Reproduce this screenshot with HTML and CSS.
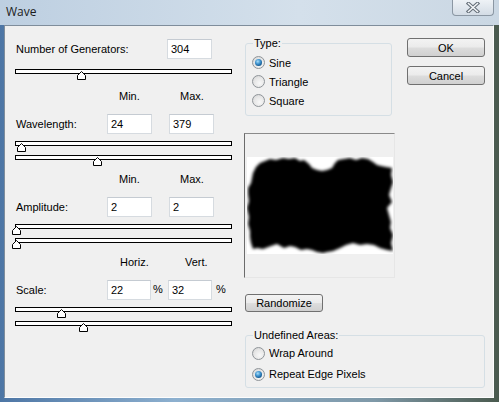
FILE: index.html
```html
<!DOCTYPE html>
<html lang="en">
<head>
    <meta charset="UTF-8">
    <meta name="viewport" content="width=device-width, initial-scale=1.0">
    <title>Wave</title>
    <link rel="stylesheet" href="styles.css">
</head>
<body>

<div class="window">
    <div class="titlebar">
        <span class="title">Wave</span>
        <button class="close" title="Close">
            <svg width="14" height="11" viewBox="0 0 14 11">
                <path d="M2.5,1.5 L11.5,9.5 M11.5,1.5 L2.5,9.5" stroke="#66707a" stroke-width="3.6" stroke-linecap="square"/>
                <path d="M2.5,1.5 L11.5,9.5 M11.5,1.5 L2.5,9.5" stroke="#f6f8fa" stroke-width="1.5" stroke-linecap="square"/>
            </svg>
        </button>
    </div>

    <div class="client">
        <!-- left column: generator settings -->
        <div class="params">
            <div class="group gen">
                <div class="row row-wide">
                    <label>Number of Generators:</label>
                    <input type="text" value="304">
                </div>
                <div class="slider">
                    <div class="track"></div>
                    <svg class="thumb" style="left: 62px" width="9" height="9" viewBox="0 0 9 9"><path d="M0.5,8.5 V4.5 L4.5,0.5 L8.5,4.5 V8.5 Z"/></svg>
                </div>
            </div>

            <div class="group wl">
                <div class="head"><span>Min.</span><span>Max.</span></div>
                <div class="row">
                    <label>Wavelength:</label>
                    <input type="text" value="24">
                    <input type="text" class="second" value="379">
                </div>
                <div class="slider">
                    <div class="track"></div>
                    <svg class="thumb" style="left: 2px" width="9" height="9" viewBox="0 0 9 9"><path d="M0.5,8.5 V4.5 L4.5,0.5 L8.5,4.5 V8.5 Z"/></svg>
                </div>
                <div class="slider">
                    <div class="track"></div>
                    <svg class="thumb" style="left: 78px" width="9" height="9" viewBox="0 0 9 9"><path d="M0.5,8.5 V4.5 L4.5,0.5 L8.5,4.5 V8.5 Z"/></svg>
                </div>
            </div>

            <div class="group">
                <div class="head"><span>Min.</span><span>Max.</span></div>
                <div class="row">
                    <label>Amplitude:</label>
                    <input type="text" value="2">
                    <input type="text" class="second" value="2">
                </div>
                <div class="slider">
                    <div class="track"></div>
                    <svg class="thumb" style="left: -3px" width="9" height="9" viewBox="0 0 9 9"><path d="M0.5,8.5 V4.5 L4.5,0.5 L8.5,4.5 V8.5 Z"/></svg>
                </div>
                <div class="slider">
                    <div class="track"></div>
                    <svg class="thumb" style="left: -3px" width="9" height="9" viewBox="0 0 9 9"><path d="M0.5,8.5 V4.5 L4.5,0.5 L8.5,4.5 V8.5 Z"/></svg>
                </div>
            </div>

            <div class="group">
                <div class="head scale"><span>Horiz.</span><span>Vert.</span></div>
                <div class="row row-scale">
                    <label>Scale:</label>
                    <input type="text" value="22">
                    <span class="pct">%</span>
                    <input type="text" value="32">
                    <span class="pct last">%</span>
                </div>
                <div class="slider">
                    <div class="track"></div>
                    <svg class="thumb" style="left: 42px" width="9" height="9" viewBox="0 0 9 9"><path d="M0.5,8.5 V4.5 L4.5,0.5 L8.5,4.5 V8.5 Z"/></svg>
                </div>
                <div class="slider">
                    <div class="track"></div>
                    <svg class="thumb" style="left: 64px" width="9" height="9" viewBox="0 0 9 9"><path d="M0.5,8.5 V4.5 L4.5,0.5 L8.5,4.5 V8.5 Z"/></svg>
                </div>
            </div>
        </div>

        <!-- right side: wave type, buttons, preview -->
        <div class="side">
            <fieldset class="type">
                <legend>Type:</legend>
                <div class="options">
                    <div class="option"><span class="radio checked"></span>Sine</div>
                    <div class="option"><span class="radio"></span>Triangle</div>
                    <div class="option"><span class="radio"></span>Square</div>
                </div>
            </fieldset>

            <div class="actions">
                <button class="btn">OK</button>
                <button class="btn">Cancel</button>
            </div>

            <div class="preview">
                <svg width="146" height="97" viewBox="0 0 146 97">
                    <defs>
                        <filter id="soft" x="-10%" y="-10%" width="120%" height="120%">
                            <feGaussianBlur stdDeviation="1.7"/>
                        </filter>
                    </defs>
                    <rect width="146" height="97" fill="#fff"/>
                    <path filter="url(#soft)" fill="#000" d="M6,16 L9,10 L13,6 L18,4 L23,2 L29,3 L36,1 L42,2 L48,1 L53,4 L57,3 L62,7 L65,11 L70,13 L75,14 L80,13 L85,11 L88,6 L91,3 L97,2 L103,1 L109,3 L115,1 L121,2 L126,5 L130,8 L134,9 L139,10 L145,11 L144,18 L146,25 L144,31 L142,38 L145,45 L140,51 L142,58 L144,65 L143,71 L146,78 L144,86 L146,94 L140,93 L133,91 L127,88 L120,87 L113,88 L106,86 L99,88 L93,91 L86,94 L80,95 L76,96 L70,95 L65,93 L60,92 L54,93 L48,90 L43,89 L37,91 L30,87 L24,89 L16,92 L10,91 L6,92 L4,86 L3,80 L3,74 L1,67 L2,60 L0,51 L2,44 L1,37 L1,31 L4,26 L5,21 Z"/>
                </svg>
            </div>

            <button class="btn randomize">Randomize</button>

            <fieldset class="undefined">
                <legend>Undefined Areas:</legend>
                <div class="options">
                    <div class="option"><span class="radio"></span>Wrap Around</div>
                    <div class="option"><span class="radio checked"></span>Repeat Edge Pixels</div>
                </div>
            </fieldset>
        </div>
    </div>
</div>

</body>
</html>
```

FILE: styles.css
```css
body {
    margin: 0;
    font-family: "Liberation Sans", Arial, sans-serif;
    font-size: 11px;
    color: #000;
    background: #4c5b4f;
    overflow: hidden;
}
.window {
    width: 499px;
    height: 402px;
    display: flex;
    flex-direction: column;
    background: linear-gradient(to right, #4d76a5, #8db0cf 35%, #7f99a8 75%, #4a5a4e);
}

/* title bar */
.titlebar {
    flex: none;
    height: 25px;
    display: flex;
    justify-content: space-between;
    align-items: flex-start;
    background: linear-gradient(to right, #bdcfe1, #d4e0eb 60%, #cad7e3);
}
.title {
    font-family: "Open Sans", "Noto Sans", sans-serif;
    font-size: 12px;
    line-height: 16px;
    color: #1c1c1c;
    padding: 4px 0 0 6px;
}
.close {
    width: 42px;
    height: 16px;
    margin-right: 5px;
    padding: 0;
    border: 1px solid #8b97a3;
    border-top: none;
    border-radius: 0 0 4px 4px;
    background: linear-gradient(#eef2f6, #d3dce5);
    display: flex;
    align-items: center;
    justify-content: center;
}

/* dialog body */
.client {
    flex: 1;
    margin: 0 5px 4px 4px;
    padding: 10px 0 0 10px;
    background: #f0f0f0;
    border: 1px solid;
    border-color: #7f8d9b #fdfdfd #fdfdfd #7f8d9b;
    display: flex;
    gap: 12px;
}

.params {
    width: 217px;
    padding-top: 3px;
}
.group + .group {
    margin-top: 5px;
}
.group.wl {
    margin-top: 8px;
}
.head, .row {
    display: grid;
    grid-template-columns: 92px 45px 17px 45px;
}
.head {
    height: 14px;
    line-height: 14px;
}
.head span:first-child {
    grid-column: 2;
    padding-left: 12px;
}
.head span:last-child {
    grid-column: 4;
    padding-left: 11px;
}
.head.scale span:first-child {
    padding-left: 13px;
}
.head.scale span:last-child {
    padding-left: 16px;
}
.row {
    height: 20px;
    margin-top: 11px;
    align-items: center;
}
.row label {
    padding-left: 1px;
}
.row .second {
    grid-column: 4;
}
.row-wide {
    grid-template-columns: 152px 45px;
    margin-top: 0;
}
.row-scale {
    grid-template-columns: 92px 44px 17px 44px 1fr;
}
.pct {
    padding-left: 2px;
    margin-top: -2px;
}
.pct.last {
    padding-left: 4px;
}
input {
    width: 100%;
    height: 20px;
    box-sizing: border-box;
    border: 1px solid #d6dbe0;
    border-top-color: #c5cbd2;
    padding: 0 3px;
    font: inherit;
    color: #000;
    background: #fff;
}

/* trackbars */
.slider {
    position: relative;
    height: 12px;
    margin-top: 7px;
}
.slider + .slider {
    margin-top: 2px;
}
.gen .slider {
    margin-top: 10px;
}
.track {
    height: 5px;
    box-sizing: border-box;
    border: 1px solid #000;
    background: #fff;
}
.thumb {
    position: absolute;
    top: 2px;
    display: block;
}
.thumb path {
    fill: #fff;
    stroke: #000;
}

/* right side */
.side {
    display: grid;
    grid-template-columns: 151px 78px;
    column-gap: 12px;
    align-items: start;
    align-content: start;
}
fieldset {
    margin: 0 0 0 1px;
    padding: 0 0 0 7px;
    border: 1px solid #d5dfe5;
    border-radius: 3px;
    min-width: 0;
    box-sizing: border-box;
}
legend {
    padding: 0 1px;
    line-height: 14px;
}
.type {
    width: 147px;
    padding-bottom: 5px;
}
.type .options {
    padding-top: 3px;
}
.option {
    display: flex;
    align-items: center;
    gap: 4px;
    height: 19px;
    margin-left: -1px;
}
.undefined {
    grid-column: 1 / 3;
    width: 240px;
    margin-top: 16px;
    padding-bottom: 3px;
}
.undefined .options {
    padding-top: 1px;
    display: flex;
    flex-direction: column;
    gap: 1px;
}
.undefined .option {
    height: 20px;
}
.radio {
    width: 13px;
    height: 13px;
    box-sizing: border-box;
    border: 1px solid #8f9499;
    border-radius: 50%;
    background: radial-gradient(circle at 60% 65%, #f8f8f8 0, #e6e6e6 55%, #cfcfcf 100%);
    display: flex;
    align-items: center;
    justify-content: center;
}
.radio.checked::after {
    content: "";
    width: 7px;
    height: 7px;
    border-radius: 50%;
    background: radial-gradient(circle at 40% 35%, #a9def8 0, #3f93cf 40%, #13568c 75%, #0d3a62 100%);
}

.actions {
    display: flex;
    flex-direction: column;
    gap: 9px;
    margin-top: 2px;
}
.btn {
    height: 19px;
    padding: 0;
    border: 1px solid #707070;
    border-radius: 3px;
    background: linear-gradient(#f3f3f3 0, #ebebeb 48%, #dddddd 52%, #d0d0d0 100%);
    font: inherit;
    color: #000;
}
.preview {
    grid-column: 1;
    height: 145px;
    margin-top: 17px;
    box-sizing: border-box;
    border: 1px solid;
    border-color: #8a8a8a #e6e6e6 #e6e6e6 #6b6b6b;
    display: flex;
    align-items: center;
    justify-content: center;
}
.preview svg {
    display: block;
}
.randomize {
    grid-column: 1;
    width: 78px;
    height: 18px;
    margin: 16px 0 0 1px;
}
```
